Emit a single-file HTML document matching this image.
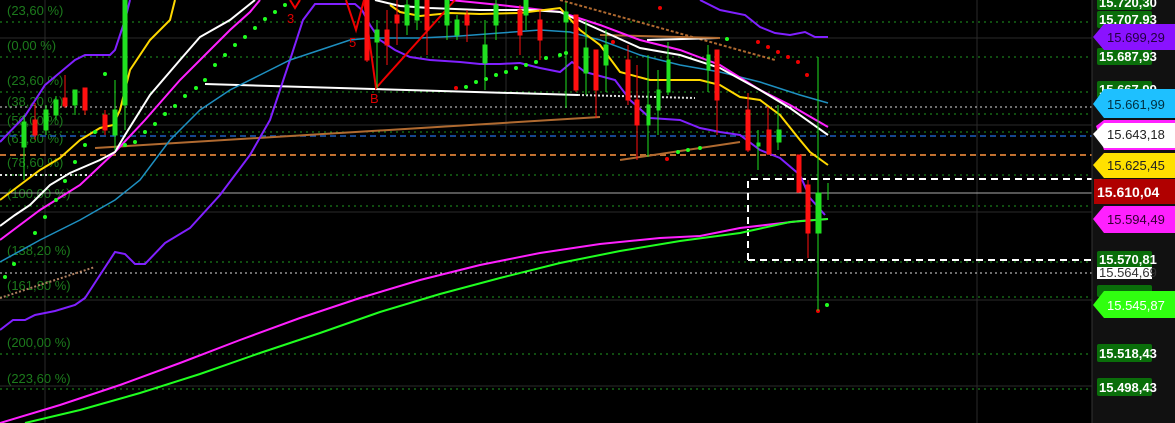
<!DOCTYPE html>
<html><head><meta charset="utf-8"><style>
html,body{margin:0;padding:0;background:#000;width:1175px;height:423px;overflow:hidden}
svg{display:block}
text{font-family:"Liberation Sans",sans-serif}
</style></head><body>
<svg width="1175" height="423" viewBox="0 0 1175 423" xmlns="http://www.w3.org/2000/svg">
<rect width="1175" height="423" fill="#000"/>
<g stroke="#2a2a2a" stroke-width="1">
<line x1="0" y1="38" x2="1092" y2="38"/><line x1="0" y1="125" x2="1092" y2="125"/>
<line x1="0" y1="212" x2="1092" y2="212"/><line x1="0" y1="300" x2="1092" y2="300"/>
<line x1="0" y1="386" x2="1092" y2="386"/>
<line x1="45" y1="0" x2="45" y2="423"/><line x1="506" y1="0" x2="506" y2="130"/><line x1="977" y1="0" x2="977" y2="423"/>
</g>
<g stroke="#1f9a1f" stroke-width="1" stroke-dasharray="2,4">
<line x1="0" y1="22" x2="1092" y2="22"/><line x1="0" y1="57" x2="1092" y2="57"/>
<line x1="0" y1="92" x2="1092" y2="92"/><line x1="0" y1="114" x2="1092" y2="114"/>
<line x1="0" y1="132" x2="1092" y2="132"/><line x1="0" y1="175" x2="1092" y2="175"/>
<line x1="0" y1="206" x2="1092" y2="206"/><line x1="0" y1="262" x2="1092" y2="262"/>
<line x1="0" y1="297" x2="1092" y2="297"/><line x1="0" y1="354" x2="1092" y2="354"/>
<line x1="0" y1="389" x2="1092" y2="389"/>
</g>
<g fill="#1c7a1c" font-size="13">
<text x="7" y="15">(23,60 %)</text><text x="7" y="50">(0,00 %)</text>
<text x="7" y="85">(23,60 %)</text><text x="7" y="106">(38,20 %)</text>
<text x="7" y="125">(50,00 %)</text><text x="7" y="143">(61,80 %)</text>
<text x="7" y="167">(78,60 %)</text><text x="7" y="198">(100,00 %)</text>
<text x="7" y="255">(138,20 %)</text><text x="7" y="290">(161,80 %)</text>
<text x="7" y="347">(200,00 %)</text><text x="7" y="383">(223,60 %)</text>
</g>
<line x1="0" y1="107" x2="1092" y2="107" stroke="#ddd" stroke-dasharray="2,3"/>
<line x1="0" y1="273" x2="1092" y2="273" stroke="#ddd" stroke-dasharray="2,3"/>
<line x1="0" y1="175" x2="95" y2="175" stroke="#ddd" stroke-dasharray="2,3" stroke-width="2"/>
<line x1="0" y1="136" x2="1092" y2="136" stroke="#1f5fc0" stroke-dasharray="6,4" stroke-width="1.5"/>
<line x1="0" y1="155" x2="1092" y2="155" stroke="#c07030" stroke-dasharray="6,4" stroke-width="2"/>
<line x1="0" y1="193" x2="1092" y2="193" stroke="#aaa" stroke-width="1"/>
<path d="M748,260 V179 H1092 M748,260 H1092" fill="none" stroke="#fff" stroke-width="2" stroke-dasharray="7,5"/>
<line x1="95" y1="148" x2="600" y2="117" stroke="#b06a30" stroke-width="2"/>
<line x1="205" y1="84" x2="578" y2="95" stroke="#fff" stroke-width="2"/>
<line x1="578" y1="95" x2="695" y2="98" stroke="#ddd" stroke-dasharray="2,2" stroke-width="2"/>
<line x1="0" y1="298" x2="95" y2="267" stroke="#b08060" stroke-dasharray="2,2" stroke-width="2"/>
<line x1="620" y1="160" x2="740" y2="142" stroke="#b06a30" stroke-width="2"/>
<line x1="560" y1="0" x2="775" y2="60" stroke="#b06a30" stroke-width="2" stroke-dasharray="3,2"/>
<line x1="647" y1="40" x2="718" y2="38" stroke="#fff" stroke-width="2"/>
<line x1="600" y1="35" x2="720" y2="38" stroke="#b06a30" stroke-width="2"/>
<polyline fill="none" stroke="#8020ff" stroke-width="2" points="0,330 13,320 25,320 35,315 55,311 75,305 85,298 100,275 115,252 125,254 135,264 145,264 165,243 190,228 220,195 250,155 270,120 290,60 303,20 315,4 355,4 362,10 370,25 380,40 395,50 410,57 430,60 460,62 480,64 500,64 520,63 540,68 560,72 572,62 585,72 600,76 615,80 630,100 650,118 680,120 700,128 720,132 740,135 760,150 780,158 800,175 810,198 825,215"/>
<polyline fill="none" stroke="#8020ff" stroke-width="2" points="0,142 25,116 45,85 75,60 85,55 110,55 115,50 125,20 130,0"/>
<polyline fill="none" stroke="#8020ff" stroke-width="2" points="700,0 720,10 745,15 760,27 775,33 790,35 805,32 815,37 828,37"/>
<polyline fill="none" stroke="#1e8fc0" stroke-width="1.5" points="0,262 40,240 80,220 115,200 140,180 170,140 200,110 230,90 260,75 290,60 320,50 350,40 370,38 420,38 460,36 500,33 540,30 570,32 600,40 640,55 680,65 720,72 760,82 800,95 828,103"/>
<polyline fill="none" stroke="#ff20ff" stroke-width="2" points="0,240 40,210 80,185 115,152 145,120 180,80 205,55 230,30 250,12 260,0"/>
<polyline fill="none" stroke="#ff20ff" stroke-width="2" points="450,0 500,5 560,12 600,25 640,40 680,50 720,65 760,90 790,105 828,127"/>
<polyline fill="none" stroke="#fff" stroke-width="2" points="0,226 15,215 30,205 50,185 70,173 100,160 115,152 125,135 150,95 180,60 200,37 230,20 255,0"/>
<polyline fill="none" stroke="#fff" stroke-width="2" points="375,0 400,6 430,8 480,10 530,10 560,12 600,30 640,48 680,55 720,68 760,90 790,108 828,135"/>
<polyline fill="none" stroke="#ffd800" stroke-width="2" points="0,200 20,185 40,170 60,158 80,140 100,128 113,125 120,110 130,70 150,40 170,20 175,0"/>
<polyline fill="none" stroke="#ffd800" stroke-width="2" points="390,5 400,12 420,16 450,13 480,14 520,13 560,8 580,30 600,45 620,72 650,80 700,80 720,85 740,97 760,100 780,115 800,140 810,152 828,165"/>
<polyline fill="none" stroke="#ff20ff" stroke-width="2" points="0,423 60,405 120,385 180,363 240,340 300,318 360,298 420,280 480,265 540,253 600,244 660,238 700,236 740,228 800,221 828,219"/>
<polyline fill="none" stroke="#20ff20" stroke-width="2" points="25,423 80,410 140,393 200,374 260,353 320,333 380,312 440,294 500,278 560,263 620,251 680,241 740,233 790,222 828,219"/>
<polyline fill="none" stroke="#e00" stroke-width="2" points="290,0 295,8 300,0"/>
<polyline fill="none" stroke="#e00" stroke-width="2" points="346,0 356,30 364,0 370,45 376,88 455,0"/>
<g fill="#d00" font-size="13"><text x="287" y="23">3</text><text x="349" y="47">5</text><text x="370" y="103">B</text></g>
<g fill="#20ff20">
<circle cx="5" cy="277" r="2"/><circle cx="14" cy="264" r="2"/><circle cx="35" cy="233" r="2"/><circle cx="45" cy="217" r="2"/><circle cx="56" cy="200" r="2"/><circle cx="65" cy="181" r="2"/><circle cx="75" cy="162" r="2"/><circle cx="85" cy="145" r="2"/><circle cx="95" cy="132" r="2"/><circle cx="105" cy="74" r="2"/><circle cx="125" cy="145" r="2"/><circle cx="135" cy="142" r="2"/><circle cx="145" cy="132" r="2"/><circle cx="155" cy="124" r="2"/><circle cx="165" cy="114" r="2"/><circle cx="175" cy="106" r="2"/><circle cx="185" cy="96" r="2"/><circle cx="196" cy="88" r="2"/><circle cx="205" cy="80" r="2"/><circle cx="215" cy="65" r="2"/><circle cx="225" cy="55" r="2"/><circle cx="235" cy="45" r="2"/><circle cx="245" cy="37" r="2"/><circle cx="255" cy="28" r="2"/><circle cx="265" cy="19" r="2"/><circle cx="275" cy="12" r="2"/><circle cx="285" cy="5" r="2"/>
<circle cx="466" cy="87" r="2"/><circle cx="476" cy="82" r="2"/><circle cx="486" cy="79" r="2"/><circle cx="496" cy="75" r="2"/><circle cx="506" cy="72" r="2"/><circle cx="516" cy="68" r="2"/><circle cx="526" cy="65" r="2"/><circle cx="536" cy="62" r="2"/><circle cx="546" cy="58" r="2"/><circle cx="560" cy="55" r="2"/><circle cx="566" cy="53" r="2"/><circle cx="678" cy="152" r="2"/><circle cx="688" cy="150" r="2"/><circle cx="700" cy="148" r="2"/><circle cx="727" cy="39" r="2"/><circle cx="827" cy="305" r="2"/>
</g>
<g fill="#e00">
<circle cx="613" cy="42" r="2"/><circle cx="660" cy="8" r="2"/><circle cx="758" cy="42" r="2"/><circle cx="768" cy="47" r="2"/><circle cx="778" cy="52" r="2"/><circle cx="788" cy="57" r="2"/><circle cx="798" cy="62" r="2"/><circle cx="807" cy="75" r="2"/><circle cx="818" cy="311" r="2"/><circle cx="667" cy="159" r="2"/><circle cx="456" cy="88" r="2"/>
</g>
<g stroke-width="1">
<g stroke="#20e020" fill="#20e020">
<line x1="24" y1="115" x2="24" y2="180"/><rect x="22" y="122" width="4" height="25"/>
<line x1="46" y1="105" x2="46" y2="135"/><rect x="44" y="110" width="4" height="20"/>
<line x1="56" y1="96" x2="56" y2="120"/><rect x="54" y="100" width="4" height="15"/>
<line x1="75" y1="90" x2="75" y2="115"/><rect x="73" y="90" width="4" height="15"/>
<line x1="115" y1="80" x2="115" y2="150"/><rect x="113" y="110" width="4" height="25"/>
<line x1="125" y1="0" x2="125" y2="130"/><rect x="123" y="0" width="4" height="105"/>
<line x1="377" y1="20" x2="377" y2="88"/><rect x="375" y="30" width="4" height="12"/>
<line x1="407" y1="0" x2="407" y2="35"/><rect x="405" y="5" width="4" height="20"/>
<line x1="417" y1="0" x2="417" y2="30"/><rect x="415" y="0" width="4" height="20"/>
<line x1="447" y1="0" x2="447" y2="40"/><rect x="445" y="0" width="4" height="25"/>
<line x1="457" y1="15" x2="457" y2="40"/><rect x="455" y="20" width="4" height="15"/>
<line x1="485" y1="20" x2="485" y2="90"/><rect x="483" y="45" width="4" height="18"/>
<line x1="496" y1="0" x2="496" y2="40"/><rect x="494" y="5" width="4" height="20"/>
<line x1="526" y1="0" x2="526" y2="30"/><rect x="524" y="0" width="4" height="15"/>
<line x1="566" y1="2" x2="566" y2="108"/><rect x="564" y="12" width="4" height="10"/>
<line x1="586" y1="20" x2="586" y2="95"/><rect x="584" y="48" width="4" height="25"/>
<line x1="606" y1="30" x2="606" y2="92"/><rect x="604" y="45" width="4" height="20"/>
<line x1="648" y1="55" x2="648" y2="157"/><rect x="647" y="105" width="3" height="20"/>
<line x1="658" y1="70" x2="658" y2="135"/><rect x="657" y="90" width="3" height="20"/>
<line x1="668" y1="42" x2="668" y2="95"/><rect x="667" y="60" width="3" height="32"/>
<line x1="708" y1="45" x2="708" y2="92"/><rect x="707" y="55" width="3" height="15"/>
<line x1="758" y1="130" x2="758" y2="170"/><rect x="757" y="143" width="3" height="3"/>
<line x1="778" y1="105" x2="778" y2="150"/><rect x="777" y="130" width="4" height="12"/>
<line x1="818" y1="57" x2="818" y2="311"/><rect x="816" y="193" width="5" height="40"/>
<line x1="828" y1="183" x2="828" y2="200"/>
</g>
<g stroke="#ff1010" fill="#ff1010">
<line x1="35" y1="103" x2="35" y2="140"/><rect x="33" y="120" width="4" height="15"/>
<line x1="65" y1="75" x2="65" y2="108"/><rect x="63" y="98" width="4" height="8"/>
<line x1="85" y1="88" x2="85" y2="115"/><rect x="83" y="88" width="4" height="22"/>
<line x1="105" y1="110" x2="105" y2="135"/><rect x="103" y="115" width="4" height="15"/>
<line x1="367" y1="0" x2="367" y2="62"/><rect x="365" y="0" width="4" height="60"/>
<line x1="387" y1="10" x2="387" y2="65"/><rect x="385" y="30" width="4" height="15"/>
<line x1="397" y1="0" x2="397" y2="45"/><rect x="395" y="15" width="4" height="8"/>
<line x1="427" y1="0" x2="427" y2="55"/><rect x="425" y="0" width="4" height="30"/>
<line x1="467" y1="10" x2="467" y2="42"/><rect x="465" y="15" width="4" height="10"/>
<line x1="576" y1="15" x2="576" y2="92"/><rect x="574" y="15" width="4" height="75"/>
<line x1="596" y1="50" x2="596" y2="118"/><rect x="594" y="50" width="4" height="40"/>
<line x1="628" y1="45" x2="628" y2="105"/><rect x="626" y="60" width="4" height="40"/>
<line x1="637" y1="65" x2="637" y2="160"/><rect x="635" y="100" width="4" height="25"/>
<line x1="717" y1="50" x2="717" y2="135"/><rect x="715" y="50" width="4" height="50"/>
<line x1="748" y1="93" x2="748" y2="152"/><rect x="746" y="110" width="4" height="40"/>
<line x1="768" y1="107" x2="768" y2="155"/><rect x="767" y="130" width="4" height="24"/>
<line x1="798" y1="155" x2="798" y2="193"/><rect x="797" y="155" width="4" height="37"/>
<line x1="808" y1="180" x2="808" y2="258"/><rect x="806" y="185" width="4" height="48"/>
<line x1="520" y1="5" x2="520" y2="55"/><rect x="518" y="10" width="4" height="25"/>
<line x1="540" y1="10" x2="540" y2="60"/><rect x="538" y="20" width="4" height="20"/>
</g>
</g>
<rect x="1092" y="0" width="83" height="423" fill="#111"/>
<line x1="1092" y1="0" x2="1092" y2="423" stroke="#333"/>
<g font-size="13" font-weight="bold">
<rect x="1097" y="-6" width="55" height="16" rx="2" fill="#0a6e0a"/><text x="1099" y="7" fill="#fff">15.720,30</text>
<rect x="1097" y="11" width="55" height="17" rx="2" fill="#0a6e0a"/><text x="1099" y="24" fill="#fff">15.707,93</text>
<rect x="1097" y="48" width="55" height="17" rx="2" fill="#0a6e0a"/><text x="1099" y="61" fill="#fff">15.687,93</text>
<rect x="1097" y="81" width="55" height="17" rx="2" fill="#0a6e0a"/><text x="1099" y="94" fill="#fff">15.667,99</text>
<rect x="1097" y="251" width="55" height="17" rx="2" fill="#0a6e0a"/><text x="1099" y="264" fill="#fff">15.570,81</text>
<rect x="1097" y="267" width="55" height="12" fill="#fff"/><text x="1099" y="277" fill="#333" font-weight="normal">15.564,69</text>
<rect x="1097" y="285" width="55" height="12" rx="2" fill="#0a6e0a"/>
<rect x="1097" y="344" width="55" height="18" rx="2" fill="#0a6e0a"/><text x="1099" y="358" fill="#fff">15.518,43</text>
<rect x="1097" y="378" width="55" height="18" rx="2" fill="#0a6e0a"/><text x="1099" y="392" fill="#fff">15.498,43</text>
</g>
<g font-size="13">
<path d="M1093,37 L1104,24 H1175 V50 H1104 Z" fill="#8a12ff"/><text x="1107" y="42" fill="#220040">15.699,29</text>
<path d="M1093,104 L1104,89 H1175 V118 H1104 Z" fill="#1ec0ff"/><text x="1107" y="109" fill="#003040">15.661,99</text>
<path d="M1096,126 L1104,120 H1175 V150 H1104 Z" fill="#ff20ff"/>
<path d="M1093,134 L1104,123 H1175 V148 H1104 Z" fill="#fff"/><text x="1107" y="139" fill="#222">15.643,18</text>
<path d="M1093,165 L1104,153 H1175 V178 H1104 Z" fill="#ffe000"/><text x="1107" y="170" fill="#222">15.625,45</text>
<rect x="1094" y="179" width="81" height="25" fill="#b00000"/><text x="1097" y="197" fill="#fff" font-weight="bold" font-size="14">15.610,04</text>
<path d="M1093,219 L1104,206 H1175 V233 H1104 Z" fill="#ff20ff"/><text x="1107" y="224" fill="#330033">15.594,49</text>
<path d="M1093,305 L1104,291 H1175 V318 H1104 Z" fill="#30ff10"/><text x="1107" y="310" fill="#fff">15.545,87</text>
</g>
</svg>
</body></html>
